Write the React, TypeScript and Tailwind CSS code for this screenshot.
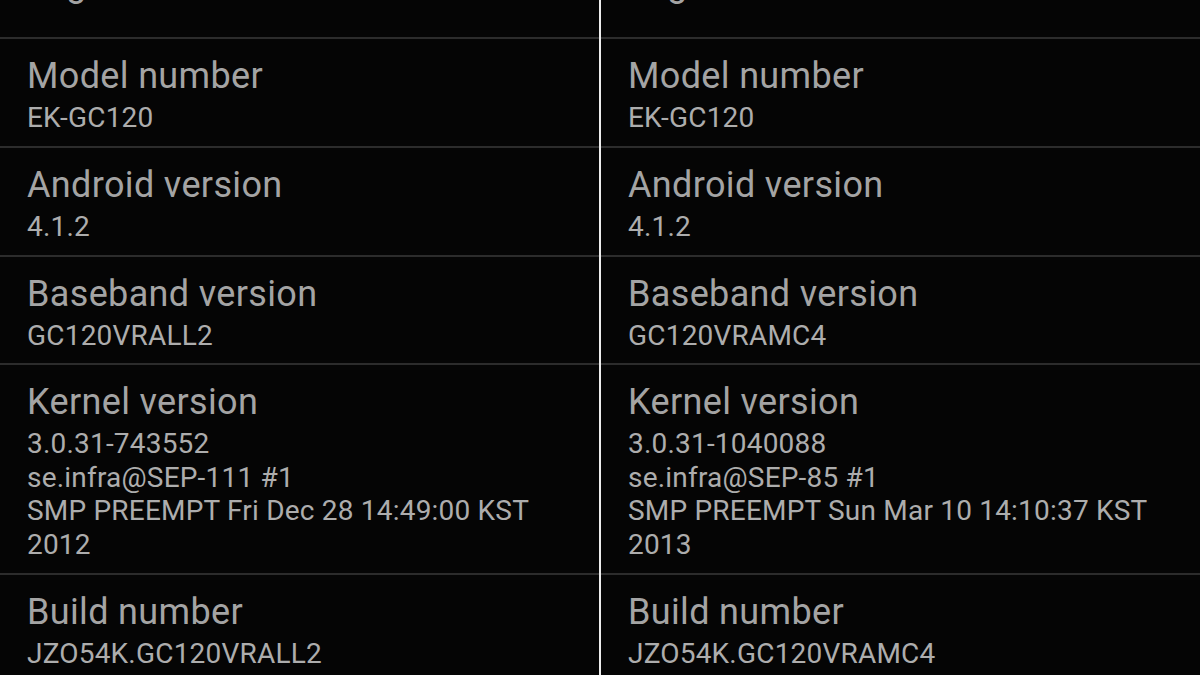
interface InfoItem {
  title: string;
  lines: string[];
}

interface Panel {
  items: InfoItem[];
}

const panels: Panel[] = [
  {
    items: [
      { title: "Model number", lines: ["EK-GC120"] },
      { title: "Android version", lines: ["4.1.2"] },
      { title: "Baseband version", lines: ["GC120VRALL2"] },
      {
        title: "Kernel version",
        lines: [
          "3.0.31-743552",
          "se.infra@SEP-111 #1",
          "SMP PREEMPT Fri Dec 28 14:49:00 KST",
          "2012",
        ],
      },
      { title: "Build number", lines: ["JZO54K.GC120VRALL2"] },
    ],
  },
  {
    items: [
      { title: "Model number", lines: ["EK-GC120"] },
      { title: "Android version", lines: ["4.1.2"] },
      { title: "Baseband version", lines: ["GC120VRAMC4"] },
      {
        title: "Kernel version",
        lines: [
          "3.0.31-1040088",
          "se.infra@SEP-85 #1",
          "SMP PREEMPT Sun Mar 10 14:10:37 KST",
          "2013",
        ],
      },
      { title: "Build number", lines: ["JZO54K.GC120VRAMC4"] },
    ],
  },
];

function Divider() {
  return <div className="h-[2px] bg-[#2c2c2c]" />;
}

function Row({ item }: { item: InfoItem }) {
  return (
    <div className="pl-[27px] pr-4 pt-[12px] pb-[11.25px]">
      <div className="text-[36px] leading-[50px] tracking-[0.35px] text-[#a4a4a4] whitespace-nowrap">
        {item.title}
      </div>
      {item.lines.map((line) => (
        <div
          key={line}
          className="text-[28px] leading-[33.5px] tracking-[0.2px] text-[#adadad] whitespace-nowrap"
        >
          {line}
        </div>
      ))}
    </div>
  );
}

function SettingsPanel({ panel }: { panel: Panel }) {
  return (
    <div className="w-[599px] shrink-0 overflow-hidden">
      {/* previous row, scrolled mostly off screen */}
      <div className="h-[37px] overflow-hidden pl-[27px]">
        <div className="-mt-[41px] text-[36px] leading-[50px] tracking-[0.35px] text-[#a4a4a4] whitespace-nowrap">
          Legal information
        </div>
      </div>
      <Divider />
      {panel.items.map((item) => (
        <div key={item.title}>
          <Row item={item} />
          <Divider />
        </div>
      ))}
    </div>
  );
}

export default function App() {
  return (
    <main
      className="w-[1200px] h-[675px] overflow-hidden bg-[#050505] flex"
      style={{ fontFamily: "Roboto, 'Liberation Sans', sans-serif" }}
    >
      <SettingsPanel panel={panels[0]} />
      <div className="w-[2px] shrink-0 bg-[#ececec]" />
      <SettingsPanel panel={panels[1]} />
    </main>
  );
}
